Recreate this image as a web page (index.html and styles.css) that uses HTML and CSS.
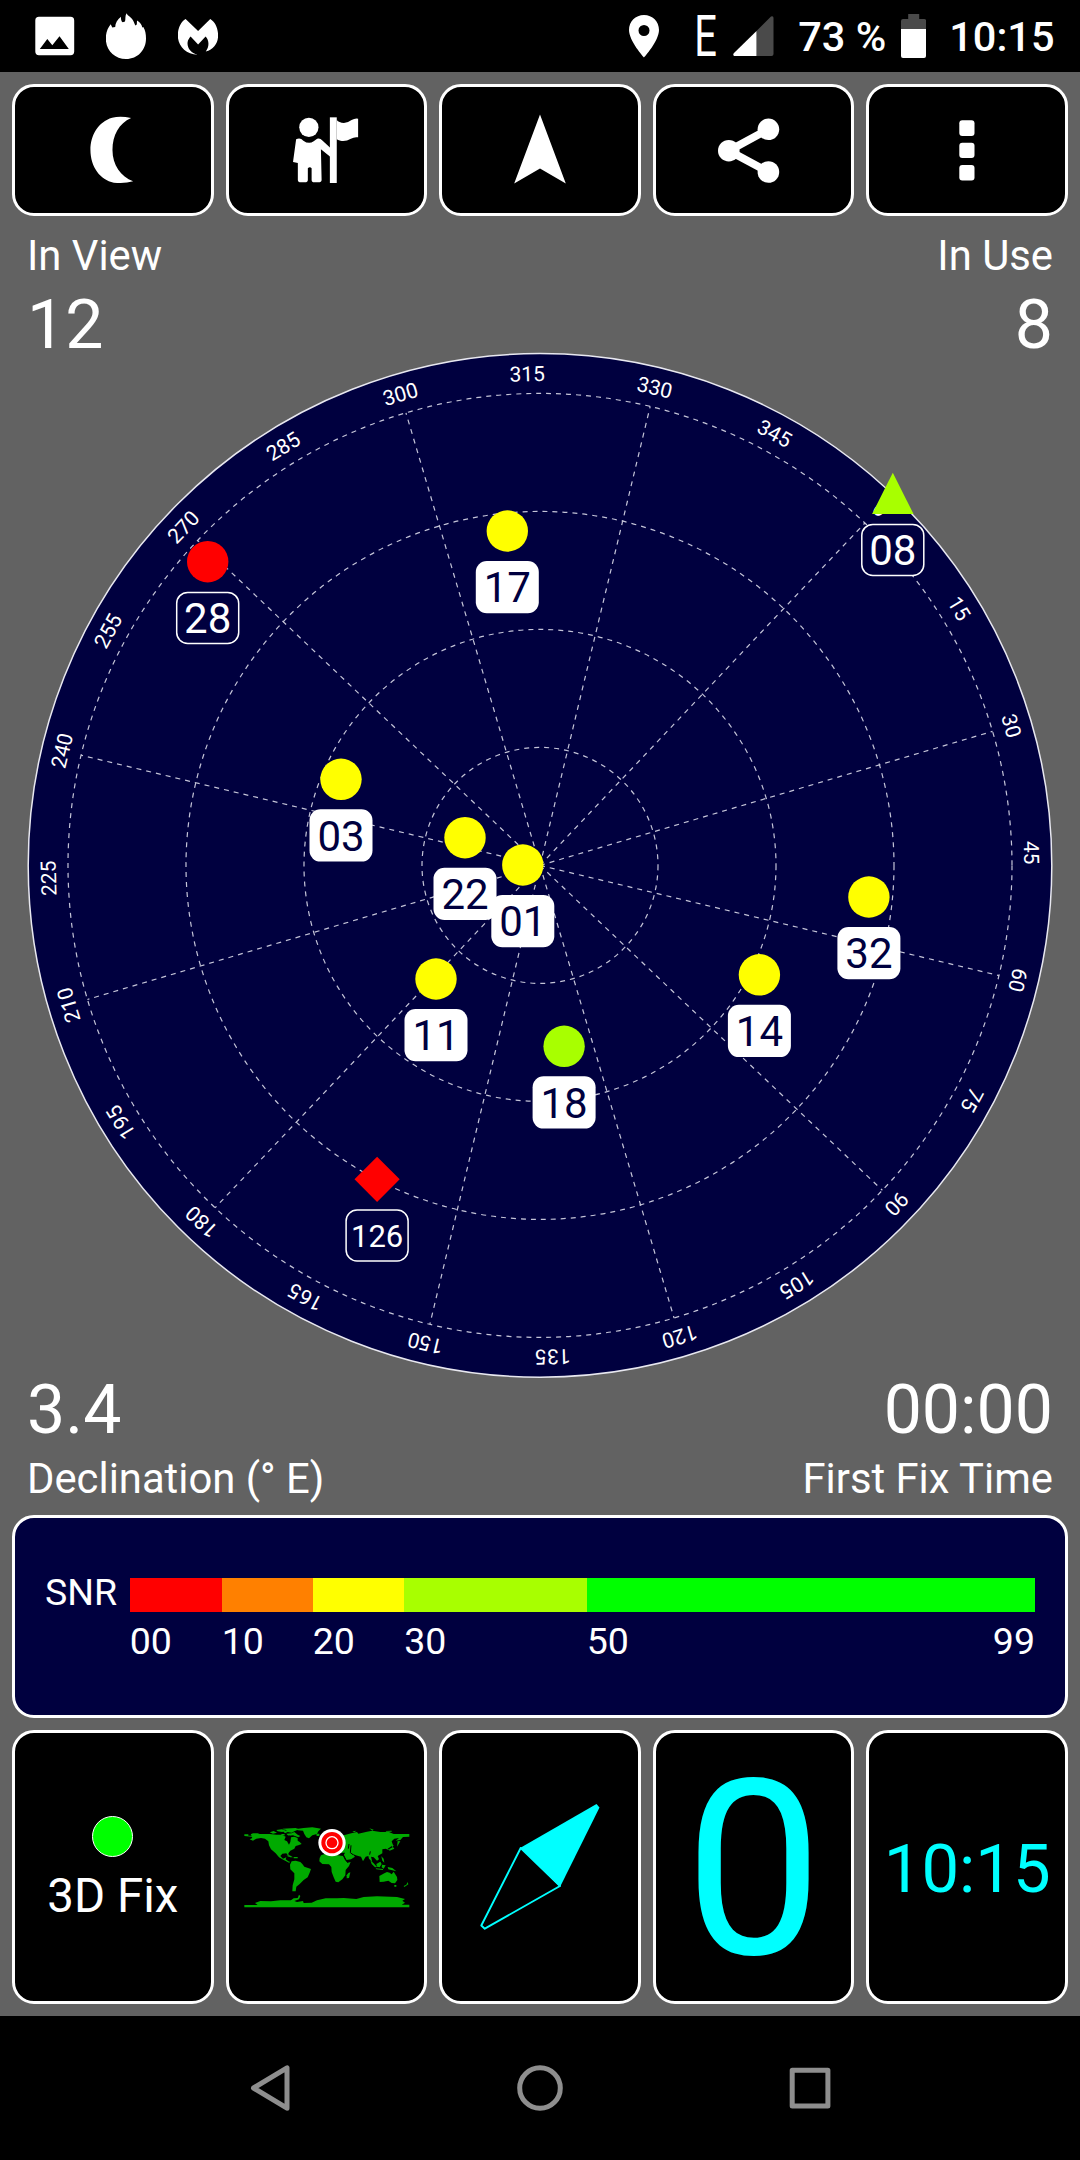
FILE: index.html
```html
<!DOCTYPE html>
<html lang="en">
<head>
<meta charset="utf-8">
<title>GPS status</title>
<link rel="stylesheet" href="styles.css">
</head>
<body>
<div class="screen">
  <header class="status">
    <div class="status-left">
      <svg width="40" height="48" viewBox="34.5 12 40 48"><path fill="#fff" fill-rule="evenodd" d="M38.500 16.700h31.500a3.700 3.700 0 0 1 3.700 3.700v31.200a3.700 3.700 0 0 1-3.700 3.700h-31.500a3.700 3.700 0 0 1-3.700-3.700v-31.200a3.700 3.700 0 0 1 3.700-3.700zM39.300 49h29l-9.300-12.700-7.200 9-5-6.200z"/></svg>
      <svg width="40" height="48" viewBox="106.200 12 40 48"><path fill="#fff" d="M126.200 59C114.500 59 106 50 106 38.500C106 33 107.800 28 110.900 24.300L112.500 27.500L115.400 27C115.500 23 117.500 19.500 121.200 16.700C121 19 121.500 21.500 123 22.300L125.200 21.500C126 19 125 16.500 126.700 13.300C128 16.500 132 17 133.800 21.500L135.500 25.500L137 24.500L137.200 20.500C140.500 22 142 25 142.500 27.500L143.500 27C145.500 30 146.200 34 146.200 38.500C146.200 50 138 59 126.200 59Z"/></svg>
      <svg width="40" height="48" viewBox="178.200 12 40 48"><path fill="#fff" d="M185.800 19c-5 3-7.800 9.500-7.800 16.500 0 10 7.500 19.200 20 19.200-7.500-2-10.800-7-10.200-12.500.3-2.200 1.500-4 3-5.700l7.500 8 7.500-8c3.500 3.500 4 10 .2 15 8-2.200 12.300-8.500 12.300-16 0-7-2.800-13.500-7.800-16.500l-12.200 12z"/></svg>
    </div>
    <div class="status-right">
      <svg class="pin" width="30" height="44" viewBox="628.500 14 30 44"><path fill="#fff" fill-rule="evenodd" d="M643.500 15c-8.500 0-15 6.500-15 15 0 11 15 27.500 15 27.500s15-16.500 15-27.500c0-8.500-6.500-15-15-15zm0 10a5.500 5.500 0 1 1 0 11 5.500 5.500 0 0 1 0-11z"/></svg>
      <svg class="net" width="28" height="72" viewBox="-3 -14 28 72"><text class="net-type" transform="translate(-2.700 41.700) scale(.7 1)">E</text></svg>
      <svg class="signal" width="41" height="44" viewBox="732.500 14 41 44"><path fill="#4a4a4a" d="M756 31l14.500-14.500q2.500-1 2.500 1.500v36q0 2-2 2h-15z"/><path fill="#fff" d="M756 31v25h-22.500q-1.500-1.500 0-3z"/></svg>
      <span class="battery-text">73 %</span>
      <svg class="battery" width="25" height="44" viewBox="901 14 25 44"><path fill="#4a4a4a" d="M908.200 14h11v5h5q2 0 2 2v8.500h-25.200v-8.500q0-2 2-2h5.200z"/><path fill="#fff" d="M901 29h25v27q0 2-2 2h-21q-2 0-2-2z"/></svg>
      <span>10:15</span>
    </div>
  </header>

  <nav class="toolbar">
    <button class="tile"><svg width="72" height="72" viewBox="76.800 114 72 72"><path transform="scale(.34439 .33333)" fill="#fff" d="M380 354Q350 347 325 353C285 365 262 405 262 450C262 500 290 540 330 548Q360 552 386 544C350 530 326 495 326 450C326 405 345 370 380 354Z"/></svg></button>
    <button class="tile"><svg width="72" height="72" viewBox="290.400 114 72 72"><g transform="scale(.34439 .33333)" fill="#fff"><ellipse cx="898" cy="382" rx="28" ry="29"/><path d="M861 418Q873 412 882 422Q898 434 912 424L922 416Q930 413 938 422L960 443V470L933 448L935 540Q935 547 925 547H914Q906 547 906 540V505Q901 498 895 505V540Q895 547 886 547H875Q866 547 866 540V489L852 486Z"/><path d="M959 352H979V549H959Z"/><path d="M979 360Q985 368 1000 369Q1010 369 1022 360Q1032 354 1041 356V412Q1030 410 1020 416Q1005 425 990 422Q982 420 979 418Z"/></g></svg></button>
    <button class="tile"><svg width="72" height="72" viewBox="504 114 72 72"><path fill="#fff" d="M540 114.500L565.800 183.500L540 168.500L514.200 183.500Z"/></svg></button>
    <button class="tile"><svg width="72" height="72" viewBox="717.600 114 72 72"><path fill="none" stroke="#fff" stroke-width="7.800" d="M768 129.300L728.400 150.700L768 172"/><g fill="#fff"><circle cx="728.400" cy="150.700" r="10.800"/><circle cx="768" cy="129.300" r="10.800"/><circle cx="768" cy="172" r="10.800"/></g></svg></button>
    <button class="tile"><svg width="72" height="72" viewBox="931.200 114 72 72"><g fill="#fff"><rect x="959.500" y="120.200" width="15.200" height="15.800" rx="3"/><rect x="959.500" y="142.800" width="15.200" height="15.300" rx="3"/><rect x="959.500" y="165" width="15.200" height="15.500" rx="3"/></g></svg></button>
  </nav>

  <section class="stats stats-top">
    <div class="stat"><span class="label">In View</span><span class="value">12</span></div>
    <div class="stat right"><span class="label">In Use</span><span class="value">8</span></div>
  </section>

  <svg class="radar" width="1080" height="1028" viewBox="0 352 1080 1028">
    <g transform="translate(540 865.400)">
      <circle class="disc" r="511.800"/>
      <g class="grid">
        <circle r="118"/><circle r="236"/><circle r="354"/><circle r="472"/>
        <g transform="rotate(43.500)">
          <path d="M0 0V-472"/>
          <path d="M0 0V-472" transform="rotate(30)"/>
          <path d="M0 0V-472" transform="rotate(60)"/>
          <path d="M0 0V-472" transform="rotate(90)"/>
          <path d="M0 0V-472" transform="rotate(120)"/>
          <path d="M0 0V-472" transform="rotate(150)"/>
          <path d="M0 0V-472" transform="rotate(180)"/>
          <path d="M0 0V-472" transform="rotate(210)"/>
          <path d="M0 0V-472" transform="rotate(240)"/>
          <path d="M0 0V-472" transform="rotate(270)"/>
          <path d="M0 0V-472" transform="rotate(300)"/>
          <path d="M0 0V-472" transform="rotate(330)"/>
        </g>
      </g>
      <g class="bearing" transform="rotate(43.500)">
        <text x="1.500" y="-485.500">0</text>
        <text y="-484.200" transform="rotate(15)">15</text>
        <text y="-484.200" transform="rotate(30)">30</text>
        <text y="-484.200" transform="rotate(45)">45</text>
        <text y="-484.200" transform="rotate(60)">60</text>
        <text y="-484.200" transform="rotate(75)">75</text>
        <text y="-484.200" transform="rotate(90)">90</text>
        <text y="-484.200" transform="rotate(105)">105</text>
        <text y="-484.200" transform="rotate(120)">120</text>
        <text y="-484.200" transform="rotate(135)">135</text>
        <text y="-484.200" transform="rotate(150)">150</text>
        <text y="-484.200" transform="rotate(165)">165</text>
        <text y="-484.200" transform="rotate(180)">180</text>
        <text y="-484.200" transform="rotate(195)">195</text>
        <text y="-484.200" transform="rotate(210)">210</text>
        <text y="-484.200" transform="rotate(225)">225</text>
        <text y="-484.200" transform="rotate(240)">240</text>
        <text y="-484.200" transform="rotate(255)">255</text>
        <text y="-484.200" transform="rotate(270)">270</text>
        <text y="-484.200" transform="rotate(285)">285</text>
        <text y="-484.200" transform="rotate(300)">300</text>
        <text y="-484.200" transform="rotate(315)">315</text>
        <text y="-484.200" transform="rotate(330)">330</text>
        <text y="-484.200" transform="rotate(345)">345</text>
      </g>
    </g>
    <g class="sat used" transform="translate(507.300 531)"><circle r="20.700" fill="#ff0"/><rect x="-31.500" y="30" width="63" height="52.300" rx="11"/><text y="71.400">17</text></g>
    <g class="sat" transform="translate(207.700 561.700)"><circle r="20.700" fill="red"/><rect x="-31" y="30.700" width="62" height="51" rx="11"/><text y="71.400">28</text></g>
    <g class="sat used" transform="translate(341 779.300)"><circle r="20.700" fill="#ff0"/><rect x="-31.500" y="30" width="63" height="52.300" rx="11"/><text y="71.400">03</text></g>
    <g class="sat used" transform="translate(465 837.700)"><circle r="20.700" fill="#ff0"/><rect x="-31.500" y="30" width="63" height="52.300" rx="11"/><text y="71.400">22</text></g>
    <g class="sat used" transform="translate(522.800 865)"><circle r="20.700" fill="#ff0"/><rect x="-31.500" y="30" width="63" height="52.300" rx="11"/><text y="71.400">01</text></g>
    <g class="sat used" transform="translate(436 979)"><circle r="20.700" fill="#ff0"/><rect x="-31.500" y="30" width="63" height="52.300" rx="11"/><text y="71.400">11</text></g>
    <g class="sat used" transform="translate(564.100 1046.300)"><circle r="20.700" fill="#a8ff00"/><rect x="-31.500" y="30" width="63" height="52.300" rx="11"/><text y="71.400">18</text></g>
    <g class="sat used" transform="translate(759.400 974.800)"><circle r="20.700" fill="#ff0"/><rect x="-31.500" y="30" width="63" height="52.300" rx="11"/><text y="71.400">14</text></g>
    <g class="sat used" transform="translate(868.900 897)"><circle r="20.700" fill="#ff0"/><rect x="-31.500" y="30" width="63" height="52.300" rx="11"/><text y="71.400">32</text></g>
    <g class="sat" transform="translate(892.800 493.700)"><path d="M0 -21L20.700 20.300H-20.700Z" fill="#a8ff00"/><rect x="-31" y="30.700" width="62" height="51" rx="11"/><text y="71.400">08</text></g>
    <g class="sat" transform="translate(377.100 1179.300)"><path d="M0 -22.600L22.600 0L0 22.600L-22.600 0Z" fill="red"/><rect x="-31" y="30.700" width="62" height="51" rx="11"/><text class="small" y="67.500">126</text></g>
  </svg>

  <section class="stats stats-bottom">
    <div class="stat"><span class="value">3.4</span><span class="label">Declination (° E)</span></div>
    <div class="stat right"><span class="value">00:00</span><span class="label">First Fix Time</span></div>
  </section>

  <section class="snr">
    <span class="snr-name">SNR</span>
    <div class="scale">
      <div class="seg s0"></div><div class="seg s10"></div><div class="seg s20"></div><div class="seg s30"></div><div class="seg s50"></div>
      <span>00</span><span>10</span><span>20</span><span>30</span><span class="ends"><span>50</span><span>99</span></span>
    </div>
  </section>

  <section class="tiles">
    <div class="tile fix"><i class="dot"></i><span>3D Fix</span></div>
    <div class="tile map">
      <svg width="166" height="82" viewBox="71 83 498 246">
        <g fill="#0a0">
          <path d="M72 105H84V109H94L91 105L98 102H112L118 104H148L168 106H184L196 112L192 122L200 126L206 136L210 128L212 114L222 112L232 116V124L238 128L244 134L234 138L226 140L222 148L210 154L204 162L206 172L198 162L186 163L180 170L188 178L198 174L196 180L204 186L210 188L206 190L186 180L176 174L166 162L152 150L146 138L144 126L134 118L122 116L108 118L98 124L88 120L96 116L94 112L72 110Z"/>
          <path d="M148 99L160 95L170 100L158 103ZM168 92L184 90L196 92L186 98L172 96ZM186 88L226 86L236 90L222 96L214 100L202 98L194 102L188 96L200 93ZM198 103L214 102L222 98L232 106L240 110L234 114L218 108L204 109ZM182 104H192L194 108L186 109Z"/>
          <path d="M228 89L250 86L276 84L294 87L302 88L294 96L290 104L276 108L266 117L258 114L252 104L248 94L232 93Z"/>
          <path d="M198 169L208 168L218 174L210 174ZM220 173H232V177H220ZM288 103H297V110H289Z"/>
          <path d="M214 186L226 184L240 188L246 194L252 202L272 209L268 220L262 234L250 242L238 254L228 262L226 276H216L217 258L222 240V222L210 210L209 196Z"/>
          <path d="M302 168L320 162L342 163L352 168L368 170L374 182L382 190L391 188L386 200L376 212L375 228L366 240L354 249L346 247L340 234L334 218L333 203L326 195L306 194L297 186L298 176Z"/>
          <path d="M384 221L390 219L386 236L379 237V228Z"/>
          <path d="M306 155L314 140L324 110L344 100L370 108L396 101L410 98L414 103L440 97L456 94L480 98L506 98L520 104H567V112L548 113L540 122L526 124L536 116L522 118L514 126L518 138L502 148L510 154L496 148L486 150V162L472 170L476 180L470 184L460 174L452 172L456 188L446 178L444 170L436 172L428 186L422 172L406 168L396 163L404 172L392 180L378 182L370 168L374 160L362 160L354 155L340 156L324 156L314 162Z"/>
          <path d="M396 96L408 94L402 99ZM447 87L460 91L456 94ZM496 95L514 94V97H498ZM532 125L540 126L530 142ZM518 143L522 148L508 154L506 150ZM512 134L520 138L516 144ZM483 171L490 178L492 190L486 184Z"/>
          <path d="M450 183L460 192L470 203L464 204L454 194ZM468 194L480 187L484 194L478 204L470 202ZM485 196L496 198L490 208L484 204ZM466 207L488 209V212L468 210ZM502 203L516 206L528 216L516 213L504 210Z"/>
          <path d="M477 230L492 222L500 218L508 220L514 225L520 217L530 233L531 242L524 252L514 251L504 244L490 247L478 248Z"/>
          <path d="M522 257H528V262H522ZM562 248L564 255L552 263L550 260L558 256Z"/>
          <path d="M72 317H112L104 311L120 305L152 306L180 303L212 303L220 297L232 296L236 286L240 290L236 300L222 305L230 308L248 305L250 311L274 310L290 303L316 297L350 297L370 296L408 299L430 293L470 291L530 293L554 299L546 304L554 310L544 316H567V324H72Z"/>
        </g>
        <g stroke="#000" fill="none" stroke-width="3"><path d="M367 162L376 180L382 190M386 134L384 148M392 138L390 160L398 166M206 108L208 118M450 156L448 166"/></g>
        <circle cx="335" cy="130" r="41" fill="#fff"/><circle cx="335" cy="130" r="32" fill="red"/><circle cx="335" cy="130" r="20" fill="#fff"/><circle cx="335" cy="130" r="16" fill="red"/>
      </svg>
    </div>
    <div class="tile"><svg width="130" height="136" viewBox="475 1799 130 136"><path fill="#0ff" d="M596.500 1804L599.500 1807.500L560 1887L520.500 1847.700Z"/><path fill="none" stroke="#0ff" stroke-width="1.900" stroke-linejoin="round" d="M520.700 1848L481.300 1925.500L484.800 1928.700L560 1886Z"/></svg></div>
    <div class="tile speed">0</div>
    <div class="tile clock">10:15</div>
  </section>

  <footer class="navbar">
    <svg width="60" height="60" viewBox="240 2058 60 60"><path d="M253.500 2088L287 2067.800V2108.200Z"/></svg>
    <svg width="60" height="60" viewBox="510 2058 60 60"><circle cx="540" cy="2088" r="20.300"/></svg>
    <svg width="60" height="60" viewBox="780 2058 60 60"><rect x="792.200" y="2070.200" width="35.700" height="35.700"/></svg>
  </footer>
</div>
</body>
</html>
```

FILE: styles.css
```css
* { box-sizing: border-box; }

body {
  margin: 0;
  background: #000;
  font-family: Roboto, "Liberation Sans", sans-serif;
  color: #fff;
}

svg { display: block; flex: none; }

.screen {
  width: 1080px;
  height: 2160px;
  background: #626262;
  display: flex;
  flex-direction: column;
  overflow: hidden;
}

.status {
  height: 72px;
  flex: none;
  background: #000;
  display: flex;
  justify-content: space-between;
  padding: 0 25.500px 0 34.500px;
  font-size: 41.500px;
  font-weight: 500;
}
.status-left, .status-right { display: flex; align-items: center; }
.status-left { gap: 31.800px; }
.status-right { line-height: 72px; padding-top: 2px; }
.status-right svg { margin-top: -2px; }
.pin { margin-right: 35.500px; }
.net { margin-right: 11px; }
.signal { margin-right: 24px; }
.battery-text { margin-right: 15px; }
.battery { margin-right: 23px; }
.net-type { font-size: 57px; font-weight: 400; fill: #fff; }

.toolbar, .tiles {
  display: grid;
  grid-template-columns: repeat(5, 1fr);
  gap: 12px;
  padding: 12px 12px 0;
  flex: none;
}
.toolbar { height: 144px; }
.tiles { height: 298px; padding-bottom: 12px; }

.tile {
  background: #000;
  border: 3px solid #fff;
  border-radius: 22px;
  padding: 0;
  display: flex;
  align-items: center;
  justify-content: center;
  min-width: 0;
}

.stats {
  display: flex;
  justify-content: space-between;
  padding: 0 27px;
  flex: none;
}
.stats-top { height: 136px; padding-top: 14.600px; }
.stats-bottom { height: 135px; padding-top: 2.400px; }
.stat { display: flex; flex-direction: column; gap: 16px; }
.right { align-items: flex-end; }
.label { font-size: 41.800px; line-height: 50px; }
.value { font-size: 68px; line-height: 56px; }

.disc { fill: #00003f; stroke: #e8e8f0; stroke-width: 1.500px; }
.grid {
  fill: none;
  stroke: #c4c4d8;
  stroke-width: 1.200px;
  stroke-dasharray: 5 5;
}
.bearing { fill: #fff; font-size: 21px; text-anchor: middle; }
.sat text { fill: #fff; font-size: 42px; text-anchor: middle; }
.sat rect { fill: #00003f; stroke: #fff; stroke-width: 1.500px; }
.sat.used rect { fill: #fff; stroke: none; }
.sat.used text { fill: #00003f; }
.sat text.small { font-size: 31px; }

.snr {
  height: 203px;
  flex: none;
  margin: 0 12px;
  background: #00003f;
  border: 3px solid #fff;
  border-radius: 22px;
  display: flex;
  padding: 60px 30px 0;
  font-size: 37.500px;
}
.snr-name { width: 84.800px; line-height: 34px; margin-top: -3px; }
.scale {
  flex: 1;
  display: grid;
  grid-template-columns: 92px 91px 91.500px 182.500px 1fr;
  grid-template-rows: 34px 58px;
  line-height: 58px;
}
.s0 { background: #f00; }
.s10 { background: #ff8000; }
.s20 { background: #ff0; }
.s30 { background: #a8ff00; }
.s50 { background: #0f0; }
.ends { display: flex; justify-content: space-between; }

.fix {
  flex-direction: column;
  gap: 11px;
  font-size: 47.500px;
  line-height: 56px;
  padding-top: 5px;
}
.dot {
  width: 41px;
  height: 41px;
  border-radius: 50%;
  border: 1.500px solid #fff;
  background: #0f0;
}
.map { padding: 2px 0 0 1px; }
.speed { color: #0ff; font-size: 245px; line-height: 250px; padding-top: 8px; }
.clock { color: #0ff; font-size: 67px; padding-top: 4px; }

.navbar {
  height: 144px;
  flex: none;
  background: #000;
  display: flex;
  justify-content: center;
  align-items: center;
  gap: 210px;
}
.navbar svg {
  fill: none;
  stroke: #8e8e8e;
  stroke-width: 5px;
  stroke-linejoin: round;
}
```
